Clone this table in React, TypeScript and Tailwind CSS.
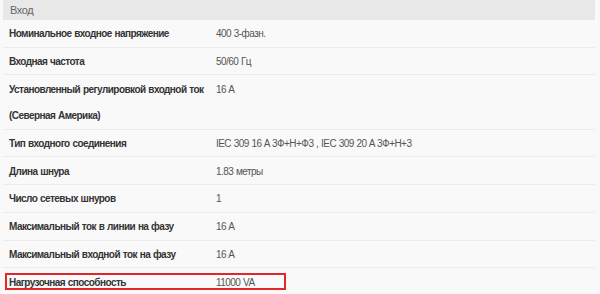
import React from 'react';

type Spec = { label: string[]; value: string };

const SPECS: Spec[] = [
  { label: ['Номинальное входное напряжение'], value: '400 3-фазн.' },
  { label: ['Входная частота'], value: '50/60 Гц' },
  { label: ['Установленный регулировкой входной ток', '(Северная Америка)'], value: '16 A' },
  { label: ['Тип входного соединения'], value: 'IEC 309 16 A 3Ф+Н+Ф3 , IEC 309 20 A 3Ф+Н+3' },
  { label: ['Длина шнура'], value: '1.83 метры' },
  { label: ['Число сетевых шнуров'], value: '1' },
  { label: ['Максимальный ток в линии на фазу'], value: '16 A' },
  { label: ['Максимальный входной ток на фазу'], value: '16 A' },
  { label: ['Нагрузочная способность'], value: '11000 VA' },
];

const App: React.FC = () => {
  return (
    <div
      className="relative w-[600px] h-[294px] overflow-hidden bg-[#f9f9f9] text-[10px] tracking-[-0.55px] [word-spacing:0.5px]"
      style={{ fontFamily: '"Liberation Sans", Arial, sans-serif' }}
    >
      {/* Section header */}
      <div className="ml-[3px] w-[592px] h-[20px] bg-[#e8e8e8] pl-[7px] flex items-center text-[11px] tracking-[-0.4px] text-[#666]">
        Вход
      </div>

      {/* Spec rows */}
      <div className="ml-[3px] w-[592px]">
        {SPECS.map((s, i) => (
          <div
            key={i}
            className={`flex ${i < SPECS.length - 1 ? 'border-b border-[#ebebeb]' : ''}`}
          >
            <div className="w-[213px] pl-[6px] font-bold text-[#333] whitespace-nowrap">
              {s.label.map((l, j) => (
                <div key={j} className="h-[26.7px] pt-[1px] flex items-center">
                  {l}
                </div>
              ))}
            </div>
            <div className="h-[26.7px] pt-[1px] flex items-center text-[#555] whitespace-nowrap">{s.value}</div>
          </div>
        ))}
      </div>

      {/* Highlight around the load capacity row */}
      <div className="absolute left-[5px] top-[273px] w-[281px] h-[17px] border-2 border-[#e3262b]" />
    </div>
  );
};

export default App;
